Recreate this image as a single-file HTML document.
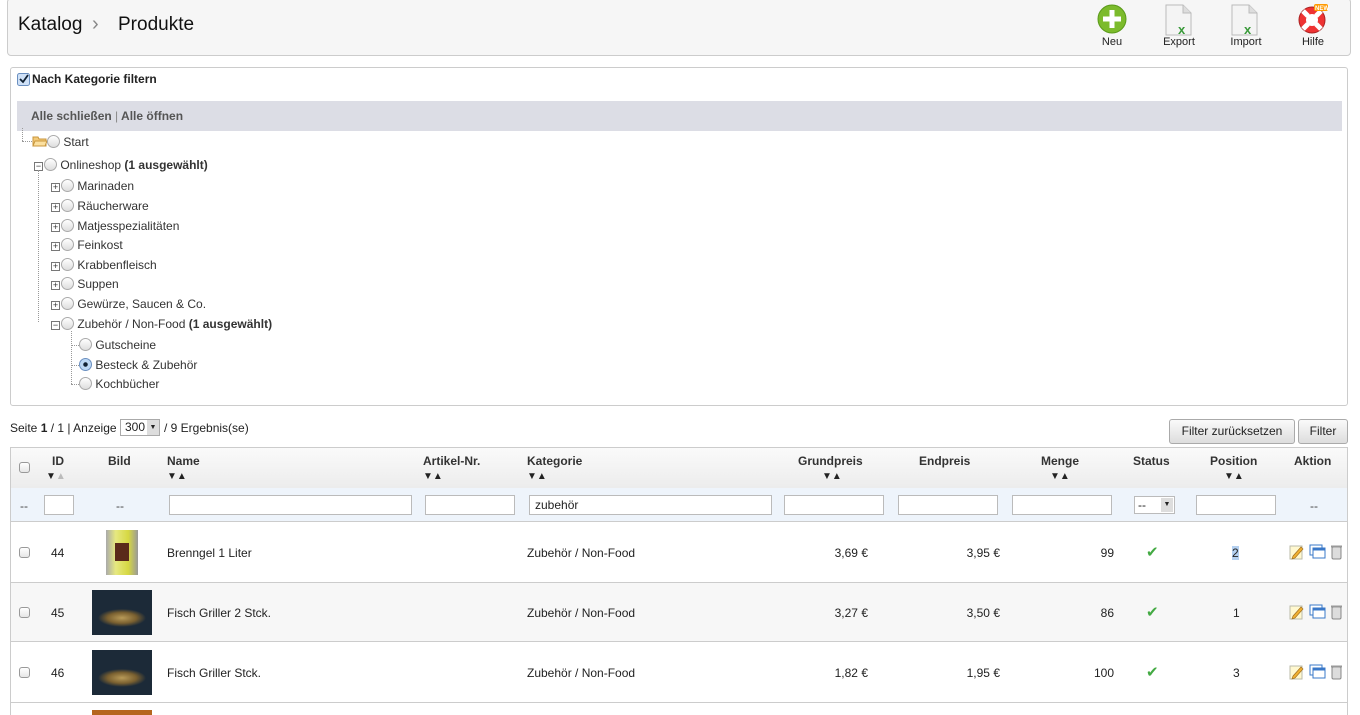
<!DOCTYPE html>
<html><head><meta charset="utf-8"><style>
*{box-sizing:border-box;margin:0;padding:0}
body{width:1360px;height:715px;overflow:hidden;background:#fff;font-family:"Liberation Sans",Arial,sans-serif;font-size:12px;color:#222;position:relative}
.a{position:absolute;white-space:nowrap}
.hdr{left:7px;top:-2px;width:1344px;height:58px;background:#f6f6f6;border:1px solid #ccc;border-radius:4px}
.panel{left:10px;top:67px;width:1338px;height:339px;border:1px solid #ccc;border-radius:3px}
.bar{left:17px;top:101px;width:1325px;height:30px;background:#dcdde5}
.radio{display:inline-block;width:13px;height:13px;border:1px solid #aaa;border-radius:50%;background:linear-gradient(#fff,#ddd);vertical-align:-2px}
.pm{display:inline-block;width:9px;height:9px;border:1px solid #777;font-size:9px;line-height:7px;text-align:center;background:#fff;vertical-align:0px;margin-right:1px}
.t{font-size:12px;color:#333}
.btn{height:25px;border:1px solid #aaa;border-radius:3px;background:linear-gradient(#fafafa,#ddd);font-size:12px;line-height:23px;text-align:center}
.inp{height:20px;border:1px solid #bbb;background:#fff}
.cb{width:11px;height:11px;border:1px solid #999;border-radius:3px;background:linear-gradient(#fff,#e6e6e6)}
.th{font-weight:bold;font-size:12px;color:#333}
.ar{font-size:10px;color:#222;letter-spacing:0px}
.ic{font-size:11px;color:#222;text-align:center;width:60px}
.fish{background:radial-gradient(ellipse 24px 9px at 50% 62%,#b89a58,#7a6030 60%,#1c2a38 100%)}
</style></head><body>
<div class="a hdr"></div>
<div class="a" style="left:18px;top:14px;font-size:19px;color:#111">Katalog</div>
<div class="a" style="left:92px;top:13px;font-size:20px;color:#888">&#8250;</div>
<div class="a" style="left:118px;top:14px;font-size:19px;color:#111">Produkte</div>

<svg class="a" style="left:1097px;top:4px" width="30" height="30"><circle cx="15" cy="15" r="14" fill="#7cbb2c" stroke="#5a9a1a"/><rect x="12.5" y="6" width="5" height="18" fill="#fff"/><rect x="6" y="12.5" width="18" height="5" fill="#fff"/></svg>
<div class="a ic" style="left:1082px;top:36px">Neu</div>
<svg class="a" style="left:1164px;top:4px" width="30" height="32"><path d="M2 1h17l8 8v22H2z" fill="#f4f4f4" stroke="#bbb"/><path d="M19 1v8h8" fill="#ddd" stroke="#bbb"/><text x="14" y="30" font-size="13" font-weight="bold" fill="#3a9a3a" font-family="Liberation Sans">x</text></svg>
<div class="a ic" style="left:1149px;top:36px">Export</div>
<svg class="a" style="left:1230px;top:4px" width="30" height="32"><path d="M2 1h17l8 8v22H2z" fill="#f4f4f4" stroke="#bbb"/><path d="M19 1v8h8" fill="#ddd" stroke="#bbb"/><text x="14" y="30" font-size="13" font-weight="bold" fill="#3a9a3a" font-family="Liberation Sans">x</text></svg>
<div class="a ic" style="left:1216px;top:36px">Import</div>
<svg class="a" style="left:1297px;top:3px" width="32" height="32"><circle cx="15" cy="17" r="13" fill="#e33" stroke="#a22"/><circle cx="15" cy="17" r="6" fill="#fff"/><path d="M6 8l5 5M24 8l-5 5M6 26l5-5M24 26l-5-5" stroke="#fff" stroke-width="5"/><rect x="17" y="1" width="14" height="7" rx="2" fill="#f90"/><text x="18" y="7" font-size="6" fill="#fff" font-family="Liberation Sans" font-weight="bold">NEW</text></svg>
<div class="a ic" style="left:1283px;top:36px">Hilfe</div>

<div class="a panel"></div>
<svg class="a" style="left:17px;top:73px" width="13" height="13"><rect x=".5" y=".5" width="12" height="12" rx="2" fill="#cfe1f7" stroke="#6a8fc0"/><path d="M3 6l3 3 5-7" stroke="#123" stroke-width="1.8" fill="none"/></svg>
<div class="a" style="left:32px;top:72px;font-weight:bold">Nach Kategorie filtern</div>
<div class="a bar"></div>
<div class="a" style="left:31px;top:109px;font-weight:bold;color:#555">Alle schließen <span style="font-weight:normal;color:#888">|</span> Alle öffnen</div>

<div class="a" style="left:22px;top:128px;width:1px;height:13px;border-left:1px dotted #999"></div>
<div class="a" style="left:22px;top:141px;width:10px;border-top:1px dotted #999"></div>
<svg class="a" style="left:32px;top:135px" width="16" height="12"><path d="M1 2h5l1 2h7v7H1z" fill="#f3c978" stroke="#c8963c"/><path d="M3 6h12l-2 5H1z" fill="#fbe0a0" stroke="#c8963c"/></svg>
<div class="a t" style="left:47px;top:135px"><span class="radio"></span> Start</div>
<div class="a t" style="left:34px;top:158px"><span class="pm">&minus;</span><span class="radio"></span> Onlineshop <b>(1 ausgewählt)</b></div>
<div class="a" style="left:38px;top:170px;width:1px;height:152px;border-left:1px dotted #999"></div>
<div class="a t" style="left:51px;top:179px"><span class="pm">+</span><span class="radio"></span> Marinaden</div>
<div class="a t" style="left:51px;top:199px"><span class="pm">+</span><span class="radio"></span> Räucherware</div>
<div class="a t" style="left:51px;top:219px"><span class="pm">+</span><span class="radio"></span> Matjesspezialitäten</div>
<div class="a t" style="left:51px;top:238px"><span class="pm">+</span><span class="radio"></span> Feinkost</div>
<div class="a t" style="left:51px;top:258px"><span class="pm">+</span><span class="radio"></span> Krabbenfleisch</div>
<div class="a t" style="left:51px;top:277px"><span class="pm">+</span><span class="radio"></span> Suppen</div>
<div class="a t" style="left:51px;top:297px"><span class="pm">+</span><span class="radio"></span> Gewürze, Saucen &amp; Co.</div>
<div class="a t" style="left:51px;top:317px"><span class="pm">&minus;</span><span class="radio"></span> Zubehör / Non-Food <b>(1 ausgewählt)</b></div>
<div class="a" style="left:71px;top:331px;width:1px;height:53px;border-left:1px dotted #999"></div>
<div class="a" style="left:71px;top:345px;width:8px;border-top:1px dotted #999"></div>
<div class="a" style="left:71px;top:365px;width:8px;border-top:1px dotted #999"></div>
<div class="a" style="left:71px;top:384px;width:8px;border-top:1px dotted #999"></div>
<div class="a t" style="left:79px;top:338px"><span class="radio"></span> Gutscheine</div>
<div class="a t" style="left:79px;top:358px"><span class="radio" style="background:radial-gradient(#123 0 2px,#bcd8f5 2.5px);border-color:#6a8fc0"></span> Besteck &amp; Zubehör</div>
<div class="a t" style="left:79px;top:377px"><span class="radio"></span> Kochbücher</div>

<div class="a" style="left:10px;top:421px">Seite <b>1</b> / 1 | Anzeige</div>
<div class="a" style="left:120px;top:419px;width:40px;height:17px;border:1px solid #aaa;background:#fff;font-size:12px;padding-left:4px;line-height:15px">300<span style="position:absolute;right:0;top:0;width:12px;height:15px;background:#ddd;font-size:7px;text-align:center">&#9660;</span></div>
<div class="a" style="left:164px;top:421px">/ 9 Ergebnis(se)</div>
<div class="a btn" style="left:1169px;top:419px;width:126px">Filter zurücksetzen</div>
<div class="a btn" style="left:1298px;top:419px;width:50px">Filter</div>

<div class="a" style="left:10px;top:447px;width:1338px;height:268px;border:1px solid #ccc;border-bottom:none"></div>
<div class="a" style="left:11px;top:448px;width:1336px;height:40px;background:linear-gradient(#fafafa,#ececec)"></div>
<div class="a" style="left:11px;top:488px;width:1336px;height:34px;background:#eef4fb;border-bottom:1px solid #ccc"></div>
<div class="a" style="left:11px;top:582px;width:1336px;height:60px;background:#f7f7f7;border-top:1px solid #ccc;border-bottom:1px solid #ccc"></div>
<div class="a" style="left:11px;top:702px;width:1336px;height:1px;background:#ccc"></div>

<div class="a cb" style="left:19px;top:462px"></div>
<div class="a th" style="left:52px;top:454px">ID</div><div class="a ar" style="left:46px;top:471px">&#9660;<span style="color:#bbb">&#9650;</span></div>
<div class="a th" style="left:108px;top:454px">Bild</div>
<div class="a th" style="left:167px;top:454px">Name</div><div class="a ar" style="left:167px;top:471px">&#9660;&#9650;</div>
<div class="a th" style="left:423px;top:454px">Artikel-Nr.</div><div class="a ar" style="left:423px;top:471px">&#9660;&#9650;</div>
<div class="a th" style="left:527px;top:454px">Kategorie</div><div class="a ar" style="left:527px;top:471px">&#9660;&#9650;</div>
<div class="a th" style="left:798px;top:454px">Grundpreis</div><div class="a ar" style="left:822px;top:471px">&#9660;&#9650;</div>
<div class="a th" style="left:919px;top:454px">Endpreis</div>
<div class="a th" style="left:1041px;top:454px">Menge</div><div class="a ar" style="left:1050px;top:471px">&#9660;&#9650;</div>
<div class="a th" style="left:1133px;top:454px">Status</div>
<div class="a th" style="left:1210px;top:454px">Position</div><div class="a ar" style="left:1224px;top:471px">&#9660;&#9650;</div>
<div class="a th" style="left:1294px;top:454px">Aktion</div>

<div class="a" style="left:20px;top:499px;color:#444">--</div>
<div class="a inp" style="left:44px;top:495px;width:30px"></div>
<div class="a" style="left:116px;top:499px;color:#444">--</div>
<div class="a inp" style="left:169px;top:495px;width:243px"></div>
<div class="a inp" style="left:425px;top:495px;width:90px"></div>
<div class="a inp" style="left:529px;top:495px;width:243px;padding-left:5px;line-height:18px">zubehör</div>
<div class="a inp" style="left:784px;top:495px;width:100px"></div>
<div class="a inp" style="left:898px;top:495px;width:100px"></div>
<div class="a inp" style="left:1012px;top:495px;width:100px"></div>
<div class="a inp" style="left:1134px;top:496px;width:41px;height:18px;padding-left:3px;line-height:16px">--<span style="position:absolute;right:1px;top:1px;width:12px;height:14px;background:#ddd;font-size:7px;text-align:center;line-height:14px">&#9660;</span></div>
<div class="a inp" style="left:1196px;top:495px;width:80px"></div>
<div class="a" style="left:1310px;top:499px;color:#444">--</div>

<div class="a cb" style="left:19px;top:547px"></div>
<div class="a" style="left:51px;top:546px">44</div>
<div class="a" style="left:106px;top:530px;width:32px;height:45px;background:linear-gradient(90deg,#aaa,#e6e880 30%,#d6d842 70%,#999);"><div style="margin:13px 9px;width:14px;height:18px;background:#5a2a1a"></div></div>
<div class="a" style="left:167px;top:546px">Brenngel 1 Liter</div>
<div class="a" style="left:527px;top:546px">Zubehör / Non-Food</div>
<div class="a" style="left:768px;top:546px;width:100px;text-align:right">3,69 €</div>
<div class="a" style="left:900px;top:546px;width:100px;text-align:right">3,95 €</div>
<div class="a" style="left:1014px;top:546px;width:100px;text-align:right">99</div>
<div class="a" style="left:1146px;top:543px;color:#4a4;font-size:15px">&#10004;</div>
<div class="a" style="left:1232px;top:546px;background:#b4d0f0">2</div>

<div class="a cb" style="left:19px;top:607px"></div>
<div class="a" style="left:51px;top:606px">45</div>
<div class="a fish" style="left:92px;top:590px;width:60px;height:45px"></div>
<div class="a" style="left:167px;top:606px">Fisch Griller 2 Stck.</div>
<div class="a" style="left:527px;top:606px">Zubehör / Non-Food</div>
<div class="a" style="left:768px;top:606px;width:100px;text-align:right">3,27 €</div>
<div class="a" style="left:900px;top:606px;width:100px;text-align:right">3,50 €</div>
<div class="a" style="left:1014px;top:606px;width:100px;text-align:right">86</div>
<div class="a" style="left:1146px;top:603px;color:#4a4;font-size:15px">&#10004;</div>
<div class="a" style="left:1233px;top:606px">1</div>

<div class="a cb" style="left:19px;top:667px"></div>
<div class="a" style="left:51px;top:666px">46</div>
<div class="a fish" style="left:92px;top:650px;width:60px;height:45px"></div>
<div class="a" style="left:167px;top:666px">Fisch Griller Stck.</div>
<div class="a" style="left:527px;top:666px">Zubehör / Non-Food</div>
<div class="a" style="left:768px;top:666px;width:100px;text-align:right">1,82 €</div>
<div class="a" style="left:900px;top:666px;width:100px;text-align:right">1,95 €</div>
<div class="a" style="left:1014px;top:666px;width:100px;text-align:right">100</div>
<div class="a" style="left:1146px;top:663px;color:#4a4;font-size:15px">&#10004;</div>
<div class="a" style="left:1233px;top:666px">3</div>
<div class="a" style="left:92px;top:710px;width:60px;height:5px;background:#b5651d"></div>

<svg class="a" style="left:1289px;top:544px" width="56" height="16"><rect x="1" y="2" width="12" height="13" fill="#fff8d0" stroke="#bba"/><path d="M4 12l8-9 2 2-8 9-3 1z" fill="#f0b030" stroke="#a07020" stroke-width=".7"/><rect x="21" y="1" width="12" height="10" fill="#fff" stroke="#3a78c8"/><rect x="24" y="4" width="12" height="10" fill="#fff" stroke="#3a78c8"/><rect x="24" y="4" width="12" height="2.5" fill="#3a78c8"/><rect x="43" y="3" width="9" height="12" rx="1.5" fill="#ddd" stroke="#888"/><rect x="42" y="1.5" width="11" height="2" fill="#999"/></svg>
<svg class="a" style="left:1289px;top:604px" width="56" height="16"><rect x="1" y="2" width="12" height="13" fill="#fff8d0" stroke="#bba"/><path d="M4 12l8-9 2 2-8 9-3 1z" fill="#f0b030" stroke="#a07020" stroke-width=".7"/><rect x="21" y="1" width="12" height="10" fill="#fff" stroke="#3a78c8"/><rect x="24" y="4" width="12" height="10" fill="#fff" stroke="#3a78c8"/><rect x="24" y="4" width="12" height="2.5" fill="#3a78c8"/><rect x="43" y="3" width="9" height="12" rx="1.5" fill="#ddd" stroke="#888"/><rect x="42" y="1.5" width="11" height="2" fill="#999"/></svg>
<svg class="a" style="left:1289px;top:664px" width="56" height="16"><rect x="1" y="2" width="12" height="13" fill="#fff8d0" stroke="#bba"/><path d="M4 12l8-9 2 2-8 9-3 1z" fill="#f0b030" stroke="#a07020" stroke-width=".7"/><rect x="21" y="1" width="12" height="10" fill="#fff" stroke="#3a78c8"/><rect x="24" y="4" width="12" height="10" fill="#fff" stroke="#3a78c8"/><rect x="24" y="4" width="12" height="2.5" fill="#3a78c8"/><rect x="43" y="3" width="9" height="12" rx="1.5" fill="#ddd" stroke="#888"/><rect x="42" y="1.5" width="11" height="2" fill="#999"/></svg>
</body></html>
